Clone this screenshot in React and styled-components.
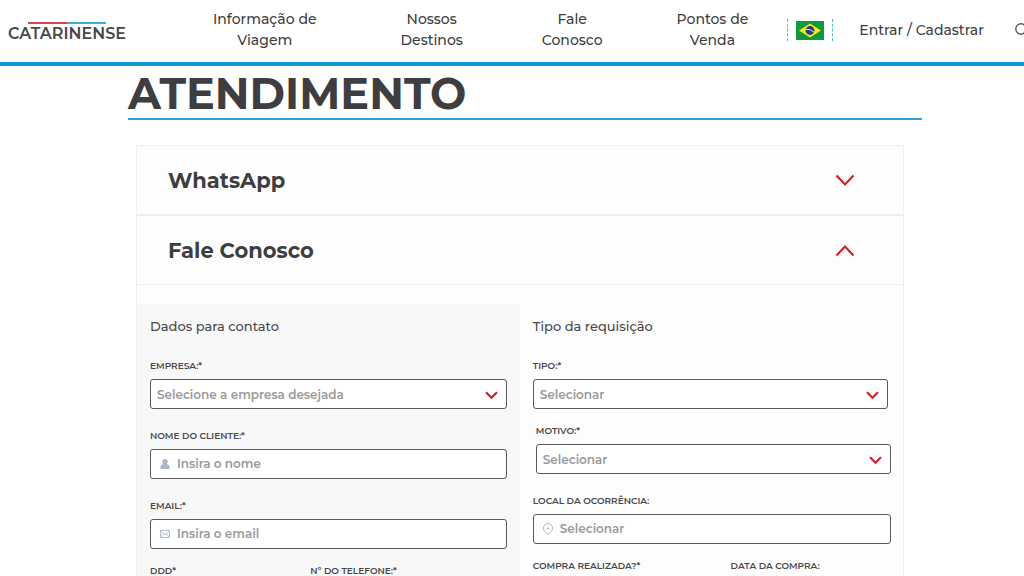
import React, { useState } from "react";

import styled, { createGlobalStyle } from "styled-components";

const GlobalStyle = createGlobalStyle`
	* {
		box-sizing: border-box;
	}

	body {
		margin: 0;
		background: #fff;
		color: #3e3e40;
		font-family: "Montserrat", "Inter", "Open Sans", sans-serif;
	}
`;

const Header = styled.header`
	display: flex;
	align-items: center;
	height: 66px;
	padding: 0 0 2px 8px;
	border-bottom: 4px solid #139ad6;
	overflow: hidden;
	white-space: nowrap;
`;

const LogoLink = styled.a`
	display: flex;
	flex-direction: column;
	flex-shrink: 0;
	padding-top: 6px;
	color: #48484a;
	font-size: 16px;
	font-weight: 600;
	line-height: 20px;
	text-decoration: none;
`;

const LogoBar = styled.span`
	height: 2px;
	width: 78px;
	margin-left: 20px;
	background: linear-gradient(to right, #d8434f 50%, #3eaed6 50%);
`;

const Nav = styled.nav`
	display: flex;
	flex-shrink: 0;
	margin-left: 45px;
`;

const NavLink = styled.a`
	padding: 0 ${({ $wide }) => ($wide ? 42 : 37)}px;
	color: #3e3e40;
	font-size: 14px;
	font-weight: 500;
	line-height: 21px;
	text-align: center;
	text-decoration: none;
`;

const LanguageButton = styled.button`
	display: flex;
	flex-shrink: 0;
	align-items: center;
	height: 22px;
	margin-left: 2px;
	padding: 0 8px;
	border: 0 dashed #58b4cf;
	border-width: 0 1px;
	background: none;
`;

const LoginLink = styled.a`
	flex-shrink: 0;
	margin-left: 26px;
	color: #3e3e40;
	font-size: 14px;
	font-weight: 500;
	line-height: 21px;
	text-decoration: none;
`;

const SearchButton = styled.button`
	display: flex;
	flex-shrink: 0;
	margin-left: 30px;
	padding: 0;
	border: 0;
	background: none;
`;

const Main = styled.main`
	margin: 0 10% 0 12.5%;
`;

const Title = styled.h1`
	margin: 0;
	padding: 4px 0 1px;
	border-bottom: 2px solid #2ba3da;
	font-size: 43px;
	font-weight: 700;
	line-height: 47px;
`;

const Accordion = styled.div`
	margin: 25px 18px 0 8px;
	border: 1px solid #efefef;
	background: #fdfdfd;
`;

const AccordionHeading = styled.h2`
	margin: 0;
	border-bottom: ${({ $open }) => ($open ? 1 : 2)}px solid #efefef;
`;

const AccordionButton = styled.button`
	display: flex;
	align-items: center;
	justify-content: space-between;
	width: 100%;
	height: 68px;
	padding: 0 48px 0 31px;
	border: 0;
	background: none;
	color: #3e3e40;
	font: inherit;
	font-size: 21px;
	font-weight: 700;
	cursor: pointer;
`;

const Form = styled.form`
	display: grid;
	grid-template-columns: repeat(2, minmax(0, 1fr));
	padding-top: 19px;
`;

const Column = styled.section`
	padding: ${({ $shaded }) => ($shaded ? "12px 13px 32px" : "12px 12px 32px 13px")};
	background: ${({ $shaded }) => ($shaded ? "#f8f8f8" : "transparent")};
`;

const ColumnTitle = styled.h3`
	margin: 0 0 24px;
	color: #48484a;
	font-size: 13px;
	font-weight: 500;
	line-height: 20px;
`;

const FieldBox = styled.div`
	margin-bottom: ${({ $tight }) => ($tight ? 16 : 21)}px;
	padding: ${({ $inset }) => ($inset === "left" ? "0 0 0 3px" : $inset === "right" ? "0 3px 0 0" : 0)};
`;

const Label = styled.label`
	display: block;
	margin-bottom: 7px;
	color: #48484a;
	font-size: 9px;
	font-weight: 600;
	line-height: 12px;
	white-space: nowrap;
`;

const Control = styled.div`
	display: flex;
	align-items: center;
	height: 30px;
	border: 1px solid #59595b;
	border-radius: 3px;
	background: #fff;

	& > svg {
		flex-shrink: 0;
		margin-left: 8px;
	}
`;

const TextInput = styled.input`
	flex: 1;
	min-width: 0;
	height: 100%;
	padding: 0 6px 2px;
	border: 0;
	outline: 0;
	background: none;
	color: #3e3e40;
	font: inherit;
	font-size: 12px;
	font-weight: 600;

	&::placeholder {
		color: #9a9a9c;
		opacity: 1;
	}
`;

const SelectWrapper = styled.div`
	position: relative;

	& > svg {
		position: absolute;
		top: 12px;
		right: 9px;
		pointer-events: none;
	}
`;

const Select = styled.select`
	display: block;
	width: 100%;
	height: 30px;
	padding: 0 30px 0 6px;
	border: 1px solid #59595b;
	border-radius: 3px;
	appearance: none;
	background: #fff;
	color: #9a9a9c;
	font: inherit;
	font-size: 12px;
	font-weight: 600;
`;

const Pair = styled.div`
	display: grid;
	grid-template-columns: minmax(0, ${({ $left }) => $left}fr) minmax(0, ${({ $right }) => $right}fr);
	column-gap: 20px;
`;

const Logo = () => (
	<LogoLink href="#inicio">
		<LogoBar />
		CATARINENSE
	</LogoLink>
);

const BrazilFlag = () => (
	<svg width="28" height="19" viewBox="0 0 28 19">
		<rect width="28" height="19" fill="#0d9b3d" />
		<path d="M3 9.5 14 2.5 25 9.5 14 16.5Z" fill="#f8e71c" />
		<circle cx="14" cy="9.5" r="4.4" fill="#1d3d86" />
		<path d="M9.9 8.3Q14.5 7.8 18 11.2" fill="none" stroke="#e4edf4" strokeWidth="1" />
	</svg>
);

const SearchIcon = () => (
	<svg width="17" height="17" viewBox="0 0 17 17" fill="none" stroke="#58585a" strokeWidth="1.4">
		<circle cx="7" cy="7" r="5.2" />
		<path d="m11 11 5 5" />
	</svg>
);

const Arrow = ({ open }) => (
	<svg width="20" height="13" viewBox="0 0 20 13" fill="none" stroke="#cf202f" strokeWidth="2.2">
		<path d={open ? "M1.5 11.5 10 2.5 18.5 11.5" : "M1.5 1.5 10 10.5 18.5 1.5"} />
	</svg>
);

const SelectArrow = () => (
	<svg width="13" height="9" viewBox="0 0 13 9" fill="none" stroke="#cf202f" strokeWidth="2.2">
		<path d="M1 1.2 6.5 6.7 12 1.2" />
	</svg>
);

const UserIcon = () => (
	<svg width="12" height="12" viewBox="0 0 12 12" fill="#aab7ca">
		<path d="M6 1C4.3 1 3.2 2 3.2 3.5c0 1.2.4 2.1 1.1 2.7-1.8.2-2.8 1-2.8 2.8v2h9V9c0-1.8-1-2.6-2.8-2.8.7-.6 1.1-1.5 1.1-2.7C8.8 2 7.7 1 6 1Z" />
	</svg>
);

const MailIcon = () => (
	<svg width="12" height="12" viewBox="0 0 12 12" fill="none" stroke="#b4bfcd" strokeWidth="1">
		<path d="M1.5 2.5h9v7h-9ZM1.5 3 6 6.8 10.5 3M1.5 9.2 4.7 5.8M10.5 9.2 7.3 5.8" />
	</svg>
);

const PinIcon = () => (
	<svg width="12" height="12" viewBox="0 0 12 12" fill="none" stroke="#aab7c8" strokeWidth="1">
		<path d="M6 11.3C3.3 9.6 1.4 7.6 1.4 5.2a4.6 4.6 0 0 1 9.2 0c0 2.4-1.9 4.4-4.6 6.1Z" />
		<circle cx="6" cy="5.4" r=".6" fill="#aab7c8" />
	</svg>
);

const SelectField = ({ id, label, placeholder, tight, inset }) => (
	<FieldBox $tight={tight} $inset={inset}>
		<Label htmlFor={id}>{label}</Label>
		<SelectWrapper>
			<Select id={id} defaultValue="">
				<option value="">{placeholder}</option>
			</Select>
			<SelectArrow />
		</SelectWrapper>
	</FieldBox>
);

const InputField = ({ id, label, placeholder, icon, tight, type = "text" }) => (
	<FieldBox $tight={tight}>
		<Label htmlFor={id}>{label}</Label>
		<Control>
			{icon}
			<TextInput id={id} type={type} placeholder={placeholder} />
		</Control>
	</FieldBox>
);

const ContactForm = () => (
	<Form>
		<Column $shaded>
			<ColumnTitle>Dados para contato</ColumnTitle>
			<SelectField id="empresa" label="EMPRESA:*" placeholder="Selecione a empresa desejada" />
			<InputField id="nome" label="NOME DO CLIENTE:*" placeholder="Insira o nome" icon={<UserIcon />} />
			<InputField id="email" type="email" label="EMAIL:*" placeholder="Insira o email" icon={<MailIcon />} tight />
			<Pair $left={5} $right={7}>
				<InputField id="ddd" label="DDD*" />
				<InputField id="telefone" type="tel" label="Nº DO TELEFONE:*" />
			</Pair>
		</Column>
		<Column>
			<ColumnTitle>Tipo da requisição</ColumnTitle>
			<SelectField id="tipo" label="TIPO:*" placeholder="Selecionar" inset="right" tight />
			<SelectField id="motivo" label="MOTIVO:*" placeholder="Selecionar" inset="left" />
			<InputField id="local" label="LOCAL DA OCORRÊNCIA:" placeholder="Selecionar" icon={<PinIcon />} tight />
			<Pair $left={10} $right={9}>
				<SelectField id="compra" label="COMPRA REALIZADA?*" />
				<InputField id="data" label="DATA DA COMPRA:" />
			</Pair>
		</Column>
	</Form>
);

const App = () => {
	const [whatsOpen, setWhatsOpen] = useState(false);
	const [contactOpen, setContactOpen] = useState(true);

	return (
		<>
			<GlobalStyle />
			<Header>
				<Logo />
				<Nav>
					<NavLink href="#viagem" $wide>Informação de<br />Viagem</NavLink>
					<NavLink href="#destinos" $wide>Nossos<br />Destinos</NavLink>
					<NavLink href="#contato">Fale<br />Conosco</NavLink>
					<NavLink href="#vendas">Pontos de<br />Venda</NavLink>
				</Nav>
				<LanguageButton type="button" aria-label="Idioma">
					<BrazilFlag />
				</LanguageButton>
				<LoginLink href="#entrar">Entrar / Cadastrar</LoginLink>
				<SearchButton type="button" aria-label="Buscar">
					<SearchIcon />
				</SearchButton>
			</Header>
			<Main>
				<Title>ATENDIMENTO</Title>
				<Accordion>
					<AccordionHeading $open={whatsOpen}>
						<AccordionButton type="button" aria-expanded={whatsOpen} onClick={() => setWhatsOpen(!whatsOpen)}>
							WhatsApp
							<Arrow open={whatsOpen} />
						</AccordionButton>
					</AccordionHeading>
					<AccordionHeading $open={contactOpen}>
						<AccordionButton type="button" aria-expanded={contactOpen} onClick={() => setContactOpen(!contactOpen)}>
							Fale Conosco
							<Arrow open={contactOpen} />
						</AccordionButton>
					</AccordionHeading>
					{contactOpen && <ContactForm />}
				</Accordion>
			</Main>
		</>
	);
};

export default App;
